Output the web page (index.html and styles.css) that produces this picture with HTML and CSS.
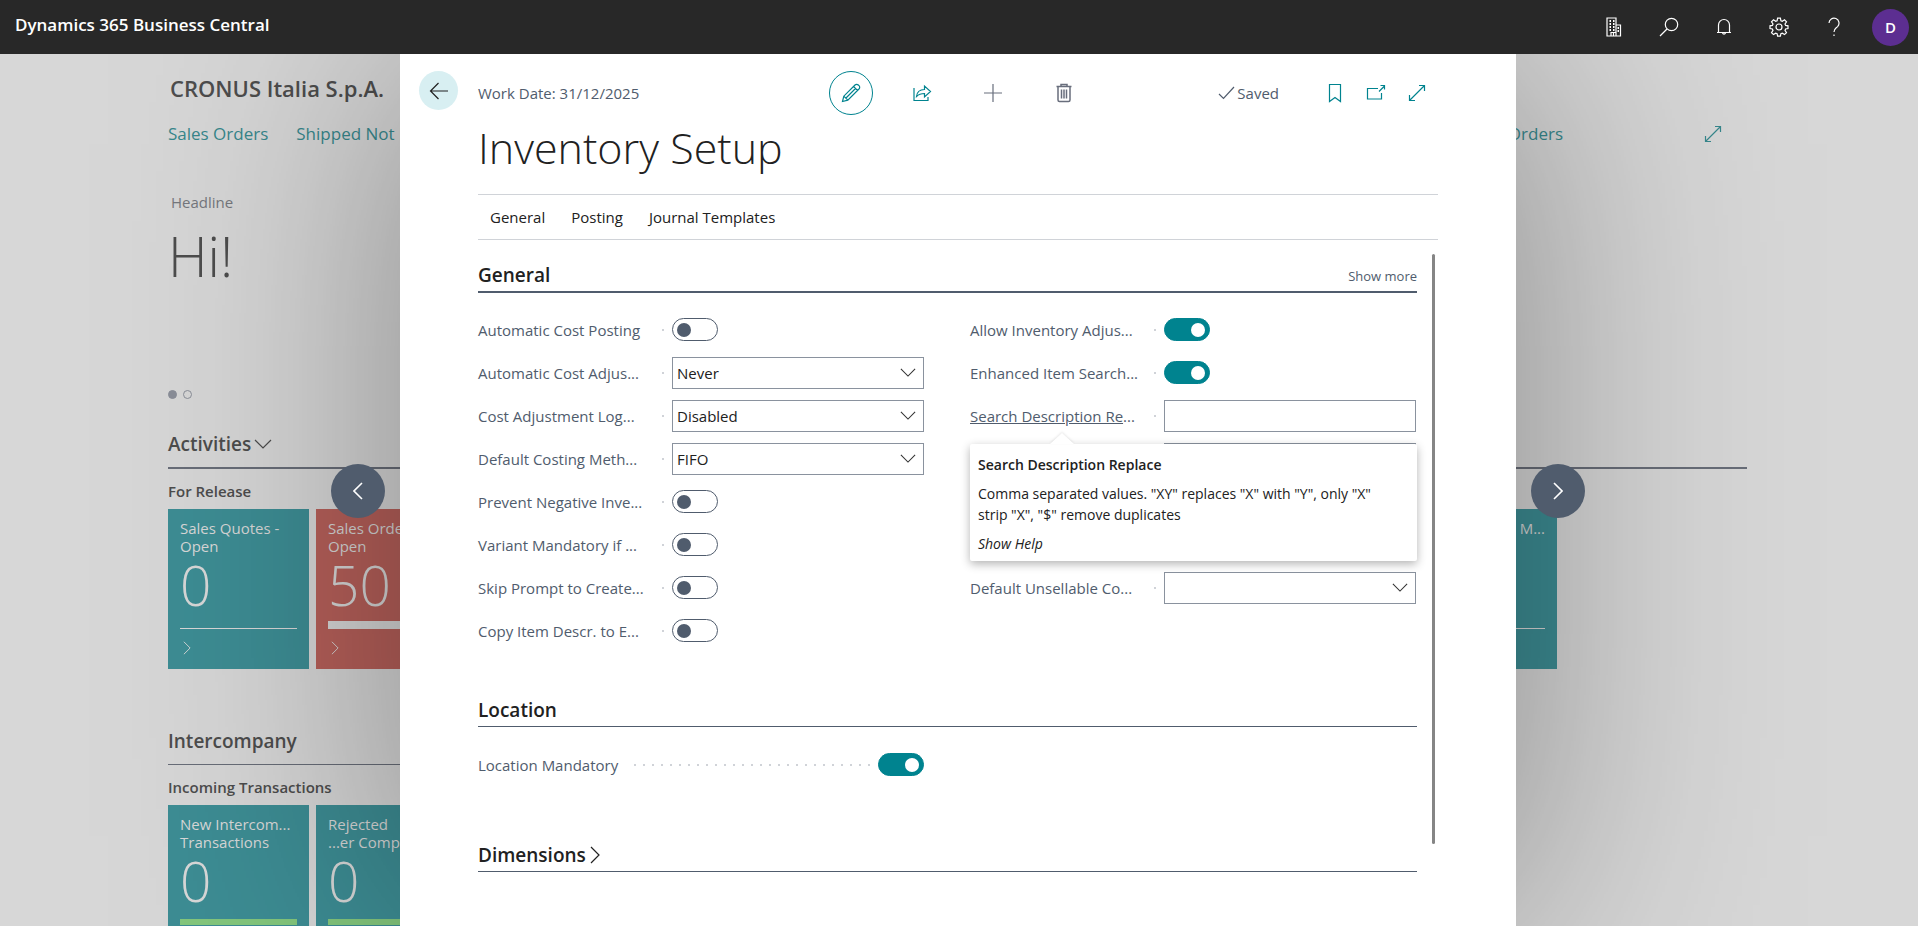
FILE: index.html
```
<!DOCTYPE html>
<html lang="en">
<head>
    <meta charset="UTF-8">
    <meta name="viewport" content="width=device-width, initial-scale=1.0">
    <title>Inventory Setup - Dynamics 365 Business Central</title>
    <link rel="stylesheet" href="styles.css">
</head>
<body>
    <!-- Shared icons -->
    <svg class="sprite" aria-hidden="true">
        <symbol id="chevron-down" viewBox="0 0 18 10"><path d="M1 1l8 8 8-8"/></symbol>
        <symbol id="chevron-right" viewBox="0 0 10 18"><path d="M1 1l8 8-8 8"/></symbol>
        <symbol id="expand" viewBox="0 0 18 18"><path d="M1.500 16.500l15-15M11 1.500h5.500v5.500M1.500 11v5.500h5.500"/></symbol>
    </svg>

    <header class="topbar">
        <a class="brand" href="#">Dynamics 365 Business Central</a>
        <div class="topbar-icons">
            <button aria-label="Companies">
                <svg width="18" height="20" viewBox="0 0 18 20"><path d="M2 1h9v7h4.500v11H2zM11 8v11M6 19v-3.500h5V19M8.500 16v3"/><path d="M4.500 4h1.500M8 4h1.500M4.500 7h1.500M8 7h1.500M4.500 10h1.500M8 10h1.500M12.500 11h1.500M4.500 13h1.500M8 13h1.500M12.500 14h1.500" stroke-width="2"/></svg>
            </button>
            <button aria-label="Search">
                <svg width="20" height="20" viewBox="0 0 20 20"><circle cx="12.500" cy="7.500" r="6.200"/><path d="M8 12l-7 7"/></svg>
            </button>
            <button aria-label="Notifications">
                <svg width="18" height="20" viewBox="0 0 18 20"><path d="M3.500 15V8a5.500 5.500 0 0 1 11 0v7M2 15.500h14M7.500 16a1.600 1.600 0 0 0 3 0"/></svg>
            </button>
            <button aria-label="Settings">
                <svg width="20" height="20" viewBox="0 0 20 20"><circle cx="10" cy="10" r="3"/><path d="M8.600 1.200h2.800l.5 2.500 1.400.6 2.200-1.500 2 2-1.500 2.200.6 1.400 2.400.4v2.700l-2.400.5-.6 1.400 1.500 2.200-2 2-2.200-1.400-1.400.5-.5 2.500H8.600l-.5-2.500-1.400-.5-2.200 1.400-2-2L4 13.400 3.400 12 1 11.500V8.800l2.400-.4L4 7 2.500 4.800l2-2 2.200 1.500 1.400-.6z"/></svg>
            </button>
            <button aria-label="Help">
                <svg width="14" height="20" viewBox="0 0 14 20"><path d="M2 6a5 5 0 1 1 8.600 3.600C8.500 11.500 7 12 7 15M7 17.500v1.500"/></svg>
            </button>
            <button class="avatar" aria-label="Account">D</button>
        </div>
    </header>

    <div class="stage">
        <!-- Role center behind the dialog -->
        <main class="role-center">
            <h1 class="company">CRONUS Italia S.p.A.</h1>
            <nav class="role-nav">
                <a href="#">Sales Orders</a>
                <a href="#">Shipped Not Invoiced</a>
                <a class="nav-last" href="#">Purchase Orders</a>
                <button class="nav-expand" aria-label="Expand"><svg width="18" height="18"><use href="#expand"/></svg></button>
            </nav>
            <div class="headline">
                <p>Headline</p>
                <h2>Hi!</h2>
                <div class="dots"><span class="dot active"></span><span class="dot"></span></div>
            </div>

            <h2 class="part-title strong">Activities <svg width="18" height="10"><use href="#chevron-down"/></svg></h2>
            <h3 class="group-title">For Release</h3>
            <div class="tiles">
                <a class="tile" href="#">
                    <span class="tile-name">Sales Quotes -<br>Open</span>
                    <span class="tile-value">0</span>
                    <span class="tile-bar"></span>
                    <svg width="8" height="14"><use href="#chevron-right"/></svg>
                </a>
                <a class="tile red" href="#">
                    <span class="tile-name">Sales Orders -<br>Open</span>
                    <span class="tile-value">50</span>
                    <span class="tile-bar thick"></span>
                    <svg width="8" height="14"><use href="#chevron-right"/></svg>
                </a>
                <a class="tile tile-last" href="#">
                    <span class="tile-name">M...</span>
                    <span class="tile-bar"></span>
                </a>
            </div>

            <div class="half">
                <h2 class="part-title">Intercompany</h2>
                <h3 class="group-title">Incoming Transactions</h3>
                <div class="tiles">
                    <a class="tile" href="#">
                        <span class="tile-name">New Intercom...<br>Transactions</span>
                        <span class="tile-value">0</span>
                        <span class="tile-bar green"></span>
                    </a>
                    <a class="tile" href="#">
                        <span class="tile-name">Rejected<br>...er Comp...</span>
                        <span class="tile-value">0</span>
                        <span class="tile-bar green"></span>
                    </a>
                </div>
            </div>
        </main>

        <section class="dialog" role="dialog" aria-labelledby="page-title">
            <button class="back" aria-label="Back">
                <svg width="20" height="18" viewBox="0 0 20 18"><path d="M19 9H1.500M9.500 1l-8 8 8 8"/></svg>
            </button>
            <div class="dialog-main">
                <div class="toolbar">
                    <span class="work-date">Work Date: 31/12/2025</span>
                    <div class="actions">
                        <button class="edit" aria-label="Edit">
                            <svg width="20" height="20" viewBox="0 0 20 20"><path d="M1.500 18.500l1.300-5.300L14 2a2.300 2.300 0 0 1 3.300 0l.7.700a2.300 2.300 0 0 1 0 3.300L6.800 17.200zM12.500 3.500l4 4M2.800 13.200l4 4M14.500 5.500L5 15"/></svg>
                        </button>
                        <button aria-label="Share">
                            <svg width="20" height="18" viewBox="0 0 20 18"><path d="M2 4v12.500h14V13M4.500 12.500c.5-5 3.500-7 8-7V2l6 5.500-6 5.500V9.500c-3 0-5.500.5-8 3z"/></svg>
                        </button>
                        <button class="muted" aria-label="New">
                            <svg width="20" height="20" viewBox="0 0 20 20"><path d="M10 1v18M1 10h18"/></svg>
                        </button>
                        <button class="muted" aria-label="Delete">
                            <svg width="18" height="20" viewBox="0 0 18 20"><path d="M1.500 3.500h15M6 3.500V1.500h6v2M3 3.500v13.500q0 1.500 1.500 1.500h9q1.500 0 1.500-1.500V3.500M6.500 6.500v9M9 6.500v9M11.500 6.500v9" stroke-width="1.500"/></svg>
                        </button>
                    </div>
                    <span class="saved"><svg width="17" height="14" viewBox="0 0 17 14"><path d="M1 8l4.500 4.500L16 1"/></svg>Saved</span>
                    <div class="window-actions">
                        <button aria-label="Bookmark">
                            <svg width="14" height="20" viewBox="0 0 14 20"><path d="M1.500 1.500h11v17L7 14.500l-5.500 4z"/></svg>
                        </button>
                        <button aria-label="Open in new window">
                            <svg width="20" height="18" viewBox="0 0 20 18"><path d="M12 4.500H1.500v10.500h14V9M13 7.500L18.500 2M14.500 1.500h4V5.500"/></svg>
                        </button>
                        <button aria-label="Expand"><svg width="18" height="18"><use href="#expand"/></svg></button>
                    </div>
                </div>
                <h1 class="page-title" id="page-title">Inventory Setup</h1>
                <nav class="tabs">
                    <a href="#general">General</a>
                    <a href="#">Posting</a>
                    <a href="#">Journal Templates</a>
                </nav>

                <div class="scroll-area">
                    <form class="sections">
                        <div class="section-head strong" id="general">
                            <h2>General</h2>
                            <button type="button" class="show-more">Show more</button>
                        </div>
                        <div class="fields">
                            <div class="column">
                                <div class="field">
                                    <label for="f1">Automatic Cost Posting</label><i class="leader"></i>
                                    <div class="control"><input class="toggle" type="checkbox" id="f1"></div>
                                </div>
                                <div class="field">
                                    <label for="f2">Automatic Cost Adjus...</label><i class="leader"></i>
                                    <div class="control select"><select id="f2"><option>Never</option></select><svg width="16" height="9"><use href="#chevron-down"/></svg></div>
                                </div>
                                <div class="field">
                                    <label for="f3">Cost Adjustment Log...</label><i class="leader"></i>
                                    <div class="control select"><select id="f3"><option>Disabled</option></select><svg width="16" height="9"><use href="#chevron-down"/></svg></div>
                                </div>
                                <div class="field">
                                    <label for="f4">Default Costing Meth...</label><i class="leader"></i>
                                    <div class="control select"><select id="f4"><option>FIFO</option></select><svg width="16" height="9"><use href="#chevron-down"/></svg></div>
                                </div>
                                <div class="field">
                                    <label for="f5">Prevent Negative Inve...</label><i class="leader"></i>
                                    <div class="control"><input class="toggle" type="checkbox" id="f5"></div>
                                </div>
                                <div class="field">
                                    <label for="f6">Variant Mandatory if ...</label><i class="leader"></i>
                                    <div class="control"><input class="toggle" type="checkbox" id="f6"></div>
                                </div>
                                <div class="field">
                                    <label for="f7">Skip Prompt to Create...</label><i class="leader"></i>
                                    <div class="control"><input class="toggle" type="checkbox" id="f7"></div>
                                </div>
                                <div class="field">
                                    <label for="f8">Copy Item Descr. to E...</label><i class="leader"></i>
                                    <div class="control"><input class="toggle" type="checkbox" id="f8"></div>
                                </div>
                            </div>
                            <div class="column">
                                <div class="field">
                                    <label for="f9">Allow Inventory Adjus...</label><i class="leader"></i>
                                    <div class="control"><input class="toggle" type="checkbox" id="f9" checked></div>
                                </div>
                                <div class="field">
                                    <label for="f10">Enhanced Item Search...</label><i class="leader"></i>
                                    <div class="control"><input class="toggle" type="checkbox" id="f10" checked></div>
                                </div>
                                <div class="field has-tip">
                                    <label for="f11"><u>Search Description Re</u>...</label><i class="leader"></i>
                                    <div class="control"><input class="text" type="text" id="f11"></div>
                                    <div class="tip" role="tooltip">
                                        <strong>Search Description Replace</strong>
                                        <p>Comma separated values. "XY" replaces "X" with "Y", only "X" strip "X", "$" remove duplicates</p>
                                        <a href="#">Show Help</a>
                                    </div>
                                </div>
                                <div class="field">
                                    <span class="spacer"></span>
                                    <div class="control"><input class="text" type="text" aria-label="Item Nos."></div>
                                </div>
                                <div class="field"></div>
                                <div class="field"></div>
                                <div class="field">
                                    <label for="f12">Default Unsellable Co...</label><i class="leader"></i>
                                    <div class="control select"><select id="f12"><option></option></select><svg width="16" height="9"><use href="#chevron-down"/></svg></div>
                                </div>
                            </div>
                        </div>

                        <div class="section-head">
                            <h2>Location</h2>
                        </div>
                        <div class="fields short">
                            <div class="column">
                                <div class="field wide">
                                    <label for="f13">Location Mandatory</label><i class="leader"></i>
                                    <input class="toggle" type="checkbox" id="f13" checked>
                                </div>
                            </div>
                        </div>

                        <div class="section-head">
                            <h2>Dimensions <svg width="10" height="18"><use href="#chevron-right"/></svg></h2>
                        </div>
                    </form>
                    <div class="scroll-thumb"></div>
                </div>
            </div>
        </section>

        <button class="pager prev" aria-label="Previous"><svg width="10" height="18" viewBox="0 0 10 18"><path d="M9 1L1 9l8 8"/></svg></button>
        <button class="pager next" aria-label="Next"><svg width="10" height="18"><use href="#chevron-right"/></svg></button>
    </div>
</body>
</html>
```

FILE: styles.css
```
* {
    box-sizing: border-box;
}
body {
    font-family: "Segoe UI", "Open Sans", "Noto Sans", sans-serif;
    font-size: 15px;
    line-height: 20px;
    color: #212121;
    margin: 0;
    height: 100vh;
    display: flex;
    flex-direction: column;
    overflow: hidden;
}
h1, h2, h3, p {
    margin: 0;
    font-weight: 600;
}
p {
    font-weight: 400;
}
a {
    color: inherit;
    text-decoration: none;
}
button {
    font: inherit;
    color: inherit;
    background: none;
    border: none;
    padding: 0;
    cursor: pointer;
    display: flex;
    align-items: center;
    justify-content: center;
}
svg {
    fill: none;
    stroke: currentColor;
    stroke-width: 1.2;
    flex: none;
}
.sprite {
    display: none;
}

/* Top bar */
.topbar {
    background: #282828;
    color: #fff;
    height: 54px;
    flex: none;
    display: flex;
    justify-content: space-between;
    padding: 0 9px 0 15px;
}
.brand {
    font-size: 17px;
    font-weight: 600;
    line-height: 50px;
}
.topbar-icons {
    display: flex;
    align-items: center;
}
.topbar-icons button {
    width: 55px;
    height: 54px;
}
.topbar-icons .avatar {
    width: 37px;
    height: 37px;
    margin-left: 11px;
    border-radius: 50%;
    background: #5c2e91;
    font-weight: 600;
}

/* Role center */
.stage {
    position: relative;
    flex: 1;
    overflow: hidden;
    background: #d7d7d7;
}
.role-center {
    padding: 19px 171px 0 168px;
    color: #4d4d4d;
}
.company {
    font-size: 22px;
    line-height: 30px;
    padding-left: 2px;
}
.role-nav {
    display: flex;
    align-items: center;
    gap: 28px;
    margin-top: 17px;
    font-size: 17px;
    line-height: 28px;
    color: #37878c;
}
.nav-last {
    margin-left: auto;
}
.nav-expand {
    margin: 0 25px 0 113px;
}
.headline {
    padding-top: 44px;
    height: 281px;
    color: #75777d;
}
.headline p {
    padding-left: 3px;
}
.headline h2 {
    font-size: 55px;
    font-weight: 300;
    line-height: 88px;
    color: #4d4d4d;
}
.dots {
    display: flex;
    gap: 6px;
    margin-top: 90px;
}
.dot {
    width: 9px;
    height: 9px;
    border: 1px solid #8a8e98;
    border-radius: 50%;
}
.dot.active {
    background: #8a8e98;
}
.half {
    width: 50%;
}
.part-title {
    display: flex;
    align-items: center;
    gap: 3px;
    font-size: 19px;
    line-height: 30px;
    padding-bottom: 8px;
    border-bottom: 1px solid #686d78;
}
.part-title.strong {
    border-bottom-width: 2px;
}
.group-title {
    font-size: 15px;
    line-height: 20px;
    padding: 12px 0 8px;
}
.tiles {
    display: flex;
    gap: 7px;
    margin-bottom: 57px;
}
.tile {
    width: 141px;
    height: 160px;
    padding: 10px 12px;
    display: flex;
    flex-direction: column;
    background: #3d8d94;
    color: #d8d8d8;
}
.tile.red {
    background: #b7605a;
}
.tile-last {
    margin: 0 190px 0 auto;
    text-align: right;
}
.tile-name {
    line-height: 18px;
    white-space: nowrap;
}
.tile-value {
    font-size: 55px;
    font-weight: 300;
    line-height: 60px;
}
.tile-bar {
    height: 1px;
    margin-top: 13px;
    background: #d8d8d8;
}
.tile-bar.thick {
    height: 8px;
    margin-top: 6px;
}
.tile-bar.green {
    height: 6px;
    margin-top: 8px;
    background: #84c77c;
}
.tile svg {
    margin: 12px 0 0 3px;
}
.tile-last .tile-bar {
    margin-top: 91px;
}

/* Dialog */
.dialog {
    position: absolute;
    top: 0;
    bottom: 0;
    left: 400px;
    right: 402px;
    display: flex;
    align-items: flex-start;
    gap: 20px;
    padding: 17px 78px 0 19px;
    background: #fff;
    box-shadow: 0 0 260px rgba(0, 0, 0, 0.38);
}
.back {
    width: 39px;
    height: 39px;
    border-radius: 50%;
    background: #d8eff2;
    color: #212121;
    flex: none;
}
.dialog-main {
    flex: 1;
}
.toolbar {
    display: flex;
    align-items: center;
    height: 44px;
    padding-right: 1px;
    color: #505c6d;
}
.work-date {
    width: 338px;
}
.actions {
    display: flex;
    align-items: center;
    color: #00838f;
}
.actions button {
    width: 71px;
}
.actions .edit {
    width: 44px;
    height: 44px;
    margin: 0 13px;
    border: 1px solid #00838f;
    border-radius: 50%;
}
.actions .muted {
    color: #686e7c;
}
.saved {
    display: flex;
    align-items: center;
    gap: 2px;
    margin-left: auto;
}
.window-actions {
    display: flex;
    margin-left: 35px;
    color: #00838f;
}
.window-actions button {
    width: 41px;
}
.page-title {
    font-size: 43px;
    font-weight: 300;
    line-height: 60px;
    padding: 3px 0 16px;
}
.tabs {
    display: flex;
    gap: 26px;
    padding: 12px 12px;
    border: solid #d0d3d8;
    border-width: 1px 0;
}
.scroll-area {
    display: flex;
    padding-top: 14px;
}
.sections {
    flex: 1;
}
.scroll-thumb {
    width: 3px;
    height: 590px;
    margin: 0 3px 0 15px;
    background: #858585;
    border-radius: 2px;
}
.section-head {
    display: flex;
    justify-content: space-between;
    align-items: center;
    border-bottom: 1px solid #505c6d;
}
.section-head.strong {
    border-bottom-width: 2px;
    padding-top: 3px;
}
.section-head h2 {
    display: flex;
    align-items: center;
    gap: 4px;
    font-size: 19px;
    line-height: 32px;
    padding-top: 2px;
}
.show-more {
    font-size: 13px;
    padding-top: 4px;
    color: #505c6d;
}
.fields {
    display: grid;
    grid-template-columns: 1fr 1fr;
    gap: 46px;
    padding: 15px 1px 40px 0;
}
.fields.short {
    padding: 16px 1px 51px 0;
}
.field {
    display: flex;
    align-items: center;
    height: 43px;
    color: #505c6d;
}
.field label {
    flex: none;
    min-width: 166px;
    white-space: nowrap;
}
.field.wide label {
    min-width: 0;
}
.leader {
    flex: 1;
    height: 2px;
    margin: 0 8px 0 14px;
    background: repeating-linear-gradient(to left, #d0d3d8 0 2px, transparent 2px 9px);
}
.spacer {
    flex: 1;
}
.control {
    width: 252px;
    display: flex;
}
.control.select {
    display: grid;
    grid-template-columns: 1fr 32px;
    align-items: center;
}
.control.select select {
    grid-area: 1 / 1 / 2 / 3;
}
.control.select svg {
    grid-area: 1 / 2;
    justify-self: center;
    color: #333;
    pointer-events: none;
}
select, .text {
    appearance: none;
    width: 100%;
    height: 32px;
    padding: 0 4px;
    font: inherit;
    color: #212121;
    background: #fff;
    border: 1px solid #8a929e;
    border-radius: 0;
}
.toggle {
    appearance: none;
    width: 46px;
    height: 23px;
    margin: 0;
    padding: 0 4px;
    display: flex;
    align-items: center;
    border: 1px solid #505c6d;
    border-radius: 12px;
    background: #fff;
}
.toggle::before {
    content: "";
    width: 14px;
    height: 14px;
    border-radius: 50%;
    background: #505c6d;
}
.toggle:checked {
    justify-content: flex-end;
    background: #00838f;
    border-color: #00838f;
}
.toggle:checked::before {
    background: #fff;
}

/* Field tooltip */
.has-tip {
    position: relative;
}
.tip {
    position: absolute;
    z-index: 1;
    top: 50px;
    left: 0;
    right: -1px;
    padding: 10px 24px 7px 8px;
    font-size: 14px;
    line-height: 21px;
    color: #212121;
    background: #fff;
    border-radius: 2px;
    box-shadow: 0 3px 10px rgba(0, 0, 0, 0.3);
}
.tip::before {
    content: "";
    position: absolute;
    top: -11px;
    left: 80px;
    border: solid transparent;
    border-width: 0 12px 11px;
    border-bottom-color: #fff;
    filter: drop-shadow(0 -1px 1px rgba(0, 0, 0, 0.1));
}
.tip strong {
    font-weight: 600;
}
.tip p {
    margin: 8px 0;
}
.tip a {
    font-style: italic;
}

/* Previous / next record */
.pager {
    position: absolute;
    top: 50%;
    width: 54px;
    height: 54px;
    margin-top: -26px;
    border-radius: 50%;
    background: #505c6d;
    color: #fff;
}
.pager svg {
    stroke-width: 1.6;
}
.prev {
    left: 331px;
}
.next {
    right: 333px;
}
```
